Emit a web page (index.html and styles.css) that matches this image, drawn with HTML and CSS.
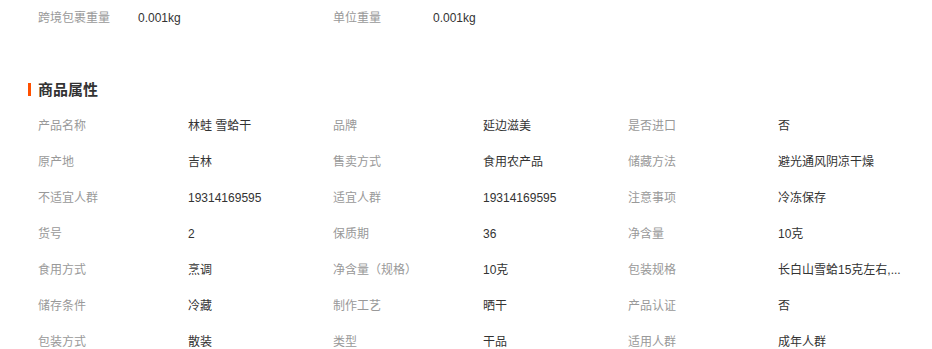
FILE: index.html
```html
<!DOCTYPE html>
<html lang="zh">
<head>
<meta charset="utf-8">
<link rel="stylesheet" href="styles.css">
</head>
<body>
<div class="page">
  <div class="pkg">
    <span class="lbl">跨境包裹重量</span><span class="val">0.001kg</span>
    <span class="lbl">单位重量</span><span class="val">0.001kg</span>
  </div>
  <h2 class="title">商品属性</h2>
  <div class="attrs">
    <span class="lbl">产品名称</span><span class="val">林蛙 雪蛤干</span>
    <span class="lbl">品牌</span><span class="val">延边滋美</span>
    <span class="lbl">是否进口</span><span class="val">否</span>

    <span class="lbl">原产地</span><span class="val">吉林</span>
    <span class="lbl">售卖方式</span><span class="val">食用农产品</span>
    <span class="lbl">储藏方法</span><span class="val">避光通风阴凉干燥</span>

    <span class="lbl">不适宜人群</span><span class="val">19314169595</span>
    <span class="lbl">适宜人群</span><span class="val">19314169595</span>
    <span class="lbl">注意事项</span><span class="val">冷冻保存</span>

    <span class="lbl">货号</span><span class="val">2</span>
    <span class="lbl">保质期</span><span class="val">36</span>
    <span class="lbl">净含量</span><span class="val">10克</span>

    <span class="lbl">食用方式</span><span class="val">烹调</span>
    <span class="lbl">净含量（规格）</span><span class="val">10克</span>
    <span class="lbl">包装规格</span><span class="val">长白山雪蛤15克左右,...</span>

    <span class="lbl">储存条件</span><span class="val">冷藏</span>
    <span class="lbl">制作工艺</span><span class="val">晒干</span>
    <span class="lbl">产品认证</span><span class="val">否</span>

    <span class="lbl">包装方式</span><span class="val">散装</span>
    <span class="lbl">类型</span><span class="val">干品</span>
    <span class="lbl">适用人群</span><span class="val">成年人群</span>
  </div>
</div>
</body>
</html>
```

FILE: styles.css
```css
html, body {
  margin: 0;
  padding: 0;
  background: #fff;
}
body {
  font-family: "Liberation Sans", "Noto Sans CJK SC", sans-serif;
  font-size: 12px;
  color: #333;
}
.page {
  padding-left: 38px;
}
.pkg {
  display: grid;
  grid-template-columns: 100px 195px 100px 195px;
  line-height: 36px;
}
.attrs {
  display: grid;
  grid-template-columns: 150px 145px 150px 145px 150px 145px;
  line-height: 36px;
  margin-top: 8px;
}
.lbl {
  color: #999;
  white-space: nowrap;
}
.val {
  color: #333;
  white-space: nowrap;
}
.title {
  position: relative;
  margin: 44px 0 0 0;
  font-size: 15px;
  font-weight: bold;
  line-height: 20px;
  color: #333;
}
.title::before {
  content: "";
  position: absolute;
  left: -10px;
  top: 3px;
  width: 3px;
  height: 13px;
  background: #ff5000;
}
```
